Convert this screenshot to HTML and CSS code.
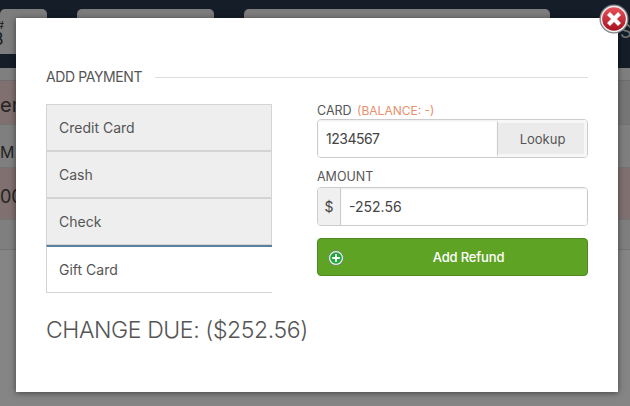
FILE: index.html
```html
<!DOCTYPE html>
<html lang="en">
<head>
    <meta charset="UTF-8">
    <meta name="viewport" content="width=device-width, initial-scale=1.0">
    <title>Add Payment</title>
    <link rel="stylesheet" href="styles.css">
</head>
<body>
    <!-- Page behind the modal -->
    <div class="page">
        <div class="topbar">
            <div class="tab tab-first">
                <div class="tab-hash">#</div>
                <div class="tab-num">3</div>
            </div>
            <div class="tab tab-second"></div>
            <div class="tab tab-third"></div>
            <div class="topbar-end">S</div>
        </div>
        <div class="subbar"></div>
        <div class="gap-row"></div>
        <div class="row row-a"><div class="row-a-cell">em</div></div>
        <div class="row row-b">M -</div>
        <div class="row row-pink row-c">00(</div>
        <div class="row row-d"></div>
    </div>
    <div class="overlay"></div>

    <!-- Modal -->
    <div class="modal">
        <button class="close" aria-label="Close">
            <svg width="30" height="30" viewBox="0 0 30 30">
                <defs>
                    <linearGradient id="red" x1="0" y1="0" x2="0" y2="1">
                        <stop offset="0" stop-color="#e8525a"/>
                        <stop offset="1" stop-color="#a81220"/>
                    </linearGradient>
                </defs>
                <circle cx="15" cy="15" r="14.5" fill="#85858c"/>
                <circle cx="15" cy="15" r="13.2" fill="#f2f2f2"/>
                <circle cx="15" cy="15" r="11.8" fill="url(#red)"/>
                <path d="M9.5 9.5L20.5 20.5M20.5 9.5L9.5 20.5" stroke="#fff" stroke-width="4.2"/>
            </svg>
        </button>

        <div class="heading">
            <h2>ADD PAYMENT</h2>
            <div class="rule"></div>
        </div>

        <div class="columns">
            <div class="left">
                <ul class="methods">
                    <li>Credit Card</li>
                    <li>Cash</li>
                    <li>Check</li>
                    <li class="active">Gift Card</li>
                </ul>
            </div>
            <div class="right">
                <label class="field-label">CARD <span class="balance">(BALANCE: -)</span></label>
                <div class="input-group">
                    <input class="text-input card-input" type="text" value="1234567">
                    <button class="lookup">Lookup</button>
                </div>
                <label class="field-label label-amount">AMOUNT</label>
                <div class="input-group">
                    <span class="addon">$</span>
                    <input class="text-input" type="text" value="-252.56">
                </div>
                <button class="submit">
                    <svg class="plus" width="16" height="16" viewBox="0 0 16 16">
                        <circle cx="8" cy="8" r="7.5" fill="#e8efe6" stroke="#6d8a63"/>
                        <circle cx="8" cy="8" r="5.8" fill="#1fa83c"/>
                        <path d="M8 4.2V11.8M4.2 8H11.8" stroke="#fff" stroke-width="2"/>
                    </svg>
                    Add Refund
                </button>
            </div>
        </div>

        <p class="change">CHANGE DUE: ($252.56)</p>
    </div>
</body>
</html>
```

FILE: styles.css
```css
* {
    margin: 0;
    padding: 0;
    box-sizing: border-box;
    font-family: Inter, "Open Sans", sans-serif;
}

html, body {
    height: 100%;
    overflow: hidden;
}

body {
    background-color: #fff;
    color: #555;
}

/* Page behind the modal */
.page {
    height: 406px;
    background-color: #fff;
}

.topbar {
    display: flex;
    height: 54px;
    padding-top: 9px;
    gap: 30px;
    background-color: #27394d;
    align-items: stretch;
}

.tab {
    flex-shrink: 0;
    background-color: #f0f0f0;
    border-radius: 5px 5px 0 0;
    color: #333;
}

.tab-first {
    width: 47px;
    padding-top: 10px;
    overflow: hidden;
}

.tab-hash {
    margin-left: -3px;
    font-size: 11px;
    line-height: 12px;
}

.tab-num {
    margin-left: -7px;
    font-size: 17px;
    line-height: 16px;
}

.tab-second {
    width: 137px;
}

.tab-third {
    width: 306px;
}

.topbar-end {
    flex-shrink: 0;
    margin: 12px 0 0 40px;
    font-size: 18px;
    color: #dcdcdc;
}

.subbar {
    height: 14px;
    background-color: #27394d;
}

.gap-row {
    height: 12px;
    background-color: #f4f4f4;
}

.row {
    border-bottom: 1px solid #dcdcdc;
    font-size: 16px;
    color: #444;
    overflow: hidden;
    white-space: nowrap;
}

.row-pink {
    background-color: #f6d7d5;
}

.row-a {
    height: 45px;
    background-color: #e2e2e2;
    border-top: 1px solid #d4d4d4;
}

.row-a-cell {
    width: 300px;
    height: 44px;
    padding-top: 12px;
    font-size: 20px;
    background-color: #f6d7d5;
}

.row-b {
    height: 43px;
    padding-top: 17px;
    background-color: #f4f4f4;
}

.row-c {
    height: 52px;
    padding-top: 18px;
    font-size: 18px;
}

.row-d {
    height: 30px;
    background-color: #f4f4f4;
}

.overlay {
    position: absolute;
    inset: 0;
    background-color: rgba(0, 0, 0, 0.48);
}

/* Modal */
.modal {
    position: absolute;
    left: 16px;
    top: 18px;
    width: 602px;
    height: 374px;
    padding: 50px 30px 0;
    background-color: #fff;
    box-shadow: 0 1px 6px rgba(0, 0, 0, 0.5);
}

.close {
    position: absolute;
    right: -11px;
    top: -14px;
    width: 30px;
    height: 30px;
    border: none;
    background: none;
}

.close svg {
    display: block;
}

.heading {
    display: flex;
    align-items: center;
    gap: 13px;
    height: 18px;
}

.heading h2 {
    margin-top: -2px;
    font-size: 14px;
    font-weight: 400;
    letter-spacing: -0.4px;
    color: #555;
}

.rule {
    flex: 1;
    height: 1px;
    background-color: #ddd;
}

.columns {
    display: flex;
    gap: 45px;
    margin-top: 18px;
}

.left {
    width: 226px;
}

.methods {
    list-style: none;
}

.methods li {
    height: 47px;
    padding: 14px 12px 0;
    font-size: 14px;
    line-height: 18px;
    color: #555;
    background-color: #eee;
    border: 1px solid #d4d4d4;
}

.methods li.active {
    height: 48px;
    background-color: #fff;
    border-top: 2px solid #5b7f9c;
    border-right: none;
}

.right {
    width: 271px;
}

.field-label {
    display: block;
    padding-bottom: 2px;
    font-size: 12.5px;
    line-height: 13px;
    color: #555;
}

.balance {
    margin-left: 2px;
    font-size: 12px;
    color: #ea8f6c;
}

.input-group {
    display: flex;
    height: 39px;
    border: 1px solid #ccc;
    border-radius: 4px;
    overflow: hidden;
}

.text-input {
    flex: 1;
    min-width: 0;
    padding: 0 8px;
    border: none;
    outline: none;
    font-size: 14px;
    color: #444;
    box-shadow: inset 0 1px 2px rgba(0, 0, 0, 0.08);
}

.card-input {
    letter-spacing: -0.5px;
}

.lookup {
    width: 90px;
    padding-left: 3px;
    border: 3px solid #f7f7f7;
    border-left: 1px solid #ccc;
    background-color: #ebebeb;
    font-size: 13px;
    color: #555;
}

.label-amount {
    margin-top: 12px;
    padding-bottom: 4px;
}

.addon {
    width: 23px;
    text-align: center;
    line-height: 37px;
    font-size: 14px;
    color: #444;
    background-color: #f0f0f0;
    border-right: 1px solid #ccc;
}

.submit {
    position: relative;
    display: block;
    width: 271px;
    height: 38px;
    margin-top: 12px;
    padding-left: 32px;
    border: 1px solid #4d8a1f;
    border-radius: 4px;
    background-color: #5fa324;
    font-size: 13px;
    font-weight: 500;
    letter-spacing: -0.15px;
    color: #fff;
}

.plus {
    position: absolute;
    left: 10px;
    top: 11px;
}

.change {
    margin-top: 23px;
    font-size: 23px;
    font-weight: 300;
    letter-spacing: -0.4px;
    color: #555;
}
```
